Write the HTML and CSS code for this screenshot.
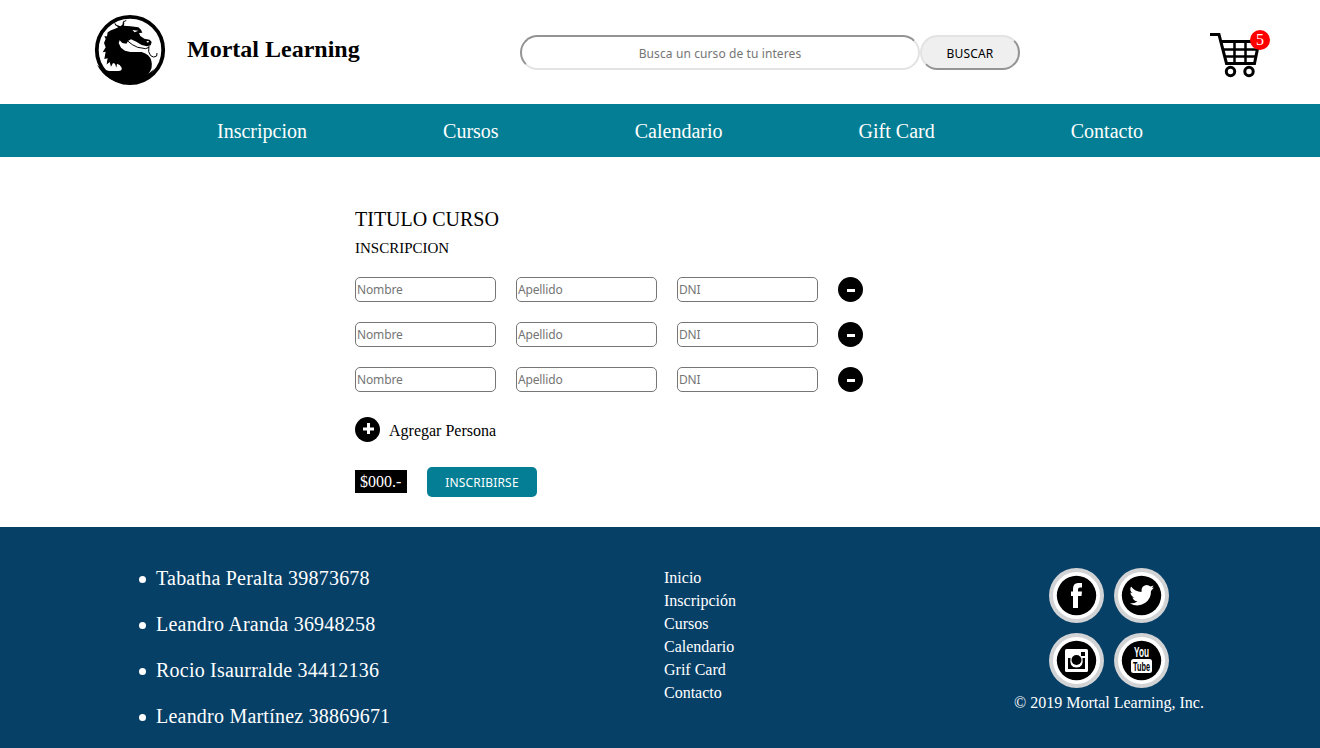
FILE: index.html
```html
<!DOCTYPE html>
<html lang="es">
<head>
<meta charset="utf-8">
<title>Mortal Learning</title>
<link rel="stylesheet" href="styles.css">
</head>
<body>
<header class="header">
  <div class="brand">
    <svg class="logo" viewBox="0 0 90 90">
      <circle cx="45" cy="45" r="33.2" fill="#fff" stroke="#000" stroke-width="3.800"/>
      <g transform="translate(8 8) scale(.3333)">
        <path d="M12 155Q25 168 48 174L76 174Q88 174 86 164L80 156L72 152L70 164L66 152L60 150L54 161L50 147L40 155L44 136L34 138L38 116L29 118L38 103L33 90L38 78L34 70L42 70L44 58L54 52L66 47L76 43L66 36L64 27L70 35L82 40L90 34L92 22L94 32L92 38L112 40L136 43L144 50L148 59L138 60L142 69L154 77L170 80L176 87L173 97L162 100L146 96L130 86L114 79L106 83L100 92L88 90L80 82L77 90L84 104L96 113L112 117L146 117Q170 124 175 143Q181 165 166 182L184 168Q162 210 111 212Q42 212 12 155Z"/>
        <path d="M104 84L118 95L134 103L158 107L168 103M168 98L167 116L173 128Q182 136 191 129L192 120M90 39L91 27L100 22" fill="none" stroke="#000" stroke-width="3"/>
        <path d="M118 51L136 53L125 58ZM160 84L168 84L165 90Z" fill="#fff"/>
        <path d="M41 145L40 160L29 148Z" fill="#fff"/>
      </g>
    </svg>
    <h1 class="brand-name">Mortal Learning</h1>
  </div>
  <form class="search">
    <input class="search-input" type="text" placeholder="Busca un curso de tu interes">
    <button class="search-button" type="button">BUSCAR</button>
  </form>
  <div class="cart">
    <svg class="cart-icon" viewBox="0 0 60 50" fill="none" stroke="#000">
      <path d="M0 4.500H9L16.500 33.500H44.500L49 11.500H11.500" stroke-width="3"/>
      <path d="M13 19.500H47M15 26.500H46M24.500 11V33M35.500 11V33" stroke-width="2.500"/>
      <circle cx="20.500" cy="41.500" r="4.200" stroke-width="3"/>
      <circle cx="39" cy="41.500" r="4.200" stroke-width="3"/>
    </svg>
    <span class="cart-count">5</span>
  </div>
</header>
<nav class="nav">
  <a>Inscripcion</a><a>Cursos</a><a>Calendario</a><a>Gift Card</a><a>Contacto</a>
</nav>
<main class="main">
  <h2 class="course-title">TITULO CURSO</h2>
  <h3 class="subtitle">INSCRIPCION</h3>
  <div class="person">
    <input class="field" placeholder="Nombre"><input class="field" placeholder="Apellido"><input class="field" placeholder="DNI">
    <button class="round" type="button"><svg viewBox="0 0 25 25"><path d="M9 12h8v3H9z" fill="#fff"/></svg></button>
  </div>
  <div class="person">
    <input class="field" placeholder="Nombre"><input class="field" placeholder="Apellido"><input class="field" placeholder="DNI">
    <button class="round" type="button"><svg viewBox="0 0 25 25"><path d="M9 12h8v3H9z" fill="#fff"/></svg></button>
  </div>
  <div class="person">
    <input class="field" placeholder="Nombre"><input class="field" placeholder="Apellido"><input class="field" placeholder="DNI">
    <button class="round" type="button"><svg viewBox="0 0 25 25"><path d="M9 12h8v3H9z" fill="#fff"/></svg></button>
  </div>
  <div class="add">
    <button class="round" type="button"><svg viewBox="0 0 25 25"><path d="M8 10.500h4V6h3v4.500h4v3h-4V17h-3v-3.500H8z" fill="#fff"/></svg></button>
    <span class="add-label">Agregar Persona</span>
  </div>
  <div class="checkout">
    <span class="price">$000.-</span>
    <button class="enroll" type="button">INSCRIBIRSE</button>
  </div>
</main>
<footer class="footer">
  <ul class="authors">
    <li>Tabatha Peralta 39873678</li>
    <li>Leandro Aranda 36948258</li>
    <li>Rocio Isaurralde 34412136</li>
    <li>Leandro Martínez 38869671</li>
  </ul>
  <div class="links">
    <a>Inicio</a><a>Inscripción</a><a>Cursos</a><a>Calendario</a><a>Grif Card</a><a>Contacto</a>
  </div>
  <div class="social">
    <div class="social-grid">
      <svg class="badge" viewBox="0 0 55 55"><circle cx="27.500" cy="27.500" r="27.500" fill="#d2d3d5"/><circle cx="27.500" cy="27.500" r="23.500" fill="#fff"/><circle cx="27.500" cy="27.500" r="19.700"/>
        <path d="M24 40V28h-2v-4.500h2V21q0-6 5-6h4v4.500h-2q-2 0-2 2v2h4l-.5 4.500H29v12z" fill="#fff"/></svg>
      <svg class="badge" viewBox="0 0 55 55"><circle cx="27.500" cy="27.500" r="27.500" fill="#d2d3d5"/><circle cx="27.500" cy="27.500" r="23.500" fill="#fff"/><circle cx="27.500" cy="27.500" r="19.700"/>
        <path d="M17 18.500q4 5 10.500 5.500-.5-6.500 5-7 2.500 0 4 1.500l3-1-1.500 2.500 2-.5-3 3.500q0 8-6 12-7 4.500-15 .5 5 0 7.500-2-4-.5-5-4h2q-4-1.500-4-5l2 .5q-3.500-2.500-1.500-6.500z" fill="#fff"/></svg>
      <svg class="badge" viewBox="0 0 55 55"><circle cx="27.500" cy="27.500" r="27.500" fill="#d2d3d5"/><circle cx="27.500" cy="27.500" r="23.500" fill="#fff"/><circle cx="27.500" cy="27.500" r="19.700"/>
        <rect x="16" y="16" width="23" height="23" rx="1.500" fill="#fff"/><path d="M19 25h2.500q-1.500 9.500 6 9.500t6-9.500H36v11H19z"/><path d="M32 19h4v4h-4z"/><circle cx="27.500" cy="27" r="5"/></svg>
      <svg class="badge" viewBox="0 0 55 55"><circle cx="27.500" cy="27.500" r="27.500" fill="#d2d3d5"/><circle cx="27.500" cy="27.500" r="23.500" fill="#fff"/><circle cx="27.500" cy="27.500" r="19.700"/>
        <rect x="17" y="26" width="21" height="14" rx="2.500" fill="#fff"/>
        <text class="yt" x="20" y="23.500" textLength="15" lengthAdjust="spacingAndGlyphs" fill="#fff">You</text>
        <text class="yt yt-small" x="19" y="37.500" textLength="17" lengthAdjust="spacingAndGlyphs">Tube</text></svg>
    </div>
    <p class="copyright">© 2019 Mortal Learning, Inc.</p>
  </div>
</footer>
</body>
</html>
```
FILE: styles.css
```css
* { box-sizing: border-box; }
body { margin: 0; font-family: "Liberation Serif", serif; font-size: 16px; color: #000; background: #fff; }
h1, h2, h3, p, ul { margin: 0; padding: 0; font-weight: normal; }
input, button { margin: 0; padding: 0; font-family: "Noto Sans", sans-serif; font-size: 12px; }
svg { display: block; }

.header { display: flex; height: 104px; padding: 5px 50px 0 85px; }
.brand { display: flex; width: 435px; }
.logo { width: 90px; height: 90px; }
.brand-name { margin: 30px 0 0 12px; font-size: 24px; line-height: 28px; font-weight: bold; }
.search { display: flex; margin-top: 30px; height: 35px; }
.search-input { width: 400px; padding-top: 1px; border: 2px solid; border-color: #949494 #e3e3e3 #e3e3e3 #949494; border-radius: 20px; text-align: center; letter-spacing: .1px; }
.search-button { width: 100px; padding-top: 2px; border: 2px solid; border-color: #e3e3e3 #949494 #949494 #e3e3e3; border-radius: 20px; background: #efefef; color: #000; letter-spacing: .2px; }
input::placeholder { color: #757575; opacity: 1; }
.cart { position: relative; width: 60px; margin: 25px 0 0 auto; }
.cart-icon { width: 60px; height: 50px; }
.cart-count { position: absolute; top: 0; right: 0; width: 20px; height: 20px; border-radius: 50%; background: #f00; color: #fff; text-align: center; line-height: 19px; }

.nav { display: flex; justify-content: space-between; height: 53px; padding: 0 177px 0 217px; background: #047e94; color: #fff; font-size: 20px; line-height: 54px; }

.main { height: 370px; padding: 50px 0 0 355px; }
.course-title { padding-top: 1px; font-size: 20px; line-height: 22px; }
.subtitle { margin: 9px 0 20px; font-size: 15px; line-height: 18px; }
.person { display: flex; gap: 20px; height: 25px; margin-bottom: 20px; }
.field { width: 141px; height: 25px; padding: 0 1px; border: 1px solid #767676; border-radius: 5px; letter-spacing: -.15px; }
.round { width: 25px; height: 25px; padding: 0; border: 0; border-radius: 50%; background: #000; }
.add { display: flex; gap: 9px; margin-top: 25px; }
.add-label { padding-top: 5px; line-height: 18px; }
.checkout { display: flex; align-items: flex-start; gap: 20px; margin-top: 25px; }
.price { width: 52px; height: 23px; margin-top: 3px; padding: 0 5px; background: #000; color: #fff; line-height: 23px; }
.enroll { width: 110px; height: 30px; border: 0; border-radius: 5px; background: #047e94; color: #fff; letter-spacing: .18px; }

.footer { display: flex; height: 221px; background: #064067; color: #fff; }
.authors { width: 508px; padding: 40px 0 0 139px; font-size: 20px; line-height: 23px; letter-spacing: .22px; list-style: none; }
.authors li { display: flex; align-items: center; gap: 10px; height: 23px; margin-bottom: 23px; }
.authors li::before { content: ""; width: 7px; height: 7px; margin-top: 1px; border-radius: 50%; background: #fff; }
.links { display: flex; flex-direction: column; width: 350px; margin-left: 156px; padding-top: 39px; line-height: 23px; }
.social { padding-top: 41px; }
.social-grid { display: grid; grid-template-columns: 55px 55px; gap: 10px; margin-left: 35px; }
.badge { width: 55px; height: 55px; }
.yt { font-family: "Liberation Sans", sans-serif; font-size: 14px; font-weight: bold; }
.yt-small { font-size: 13px; }
.copyright { margin-top: 6px; line-height: 18px; }
```
